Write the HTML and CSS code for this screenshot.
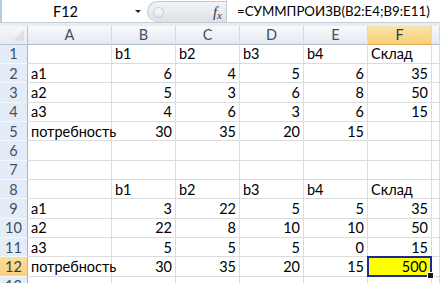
FILE: index.html
```html
<!DOCTYPE html>
<html lang="ru">

<head>
    <meta charset="UTF-8">
    <meta name="viewport" content="width=device-width, initial-scale=1.0">
    <link rel="stylesheet" href="styles.css">
    <title>СУММПРОИЗВ</title>
</head>

<body>
    <!-- Formula bar -->
    <div class="formula-bar">
        <div class="name-box">
            <span class="name-text">F12</span>
            <span class="drop-arrow"></span>
        </div>
        <div class="fx-pill">
            <span class="dot"></span>
            <span class="fx">f<sub>x</sub></span>
        </div>
        <div class="formula-input">=СУММПРОИЗВ(B2:E4;B9:E11)</div>
    </div>
    <div class="bar-gap"></div>

    <!-- Sheet -->
    <div class="sheet">
        <div class="corner"><span class="corner-tri"></span></div>
        <div class="col-head">A</div>
        <div class="col-head">B</div>
        <div class="col-head">C</div>
        <div class="col-head">D</div>
        <div class="col-head">E</div>
        <div class="col-head active">F</div>
        <div class="col-head"></div>

        <div class="row-head">1</div>
        <div class="cell"></div>
        <div class="cell">b1</div>
        <div class="cell">b2</div>
        <div class="cell">b3</div>
        <div class="cell">b4</div>
        <div class="cell">Склад</div>
        <div class="cell"></div>

        <div class="row-head">2</div>
        <div class="cell">a1</div>
        <div class="cell num">6</div>
        <div class="cell num">4</div>
        <div class="cell num">5</div>
        <div class="cell num">6</div>
        <div class="cell num">35</div>
        <div class="cell"></div>

        <div class="row-head">3</div>
        <div class="cell">a2</div>
        <div class="cell num">5</div>
        <div class="cell num">3</div>
        <div class="cell num">6</div>
        <div class="cell num">8</div>
        <div class="cell num">50</div>
        <div class="cell"></div>

        <div class="row-head">4</div>
        <div class="cell">a3</div>
        <div class="cell num">4</div>
        <div class="cell num">6</div>
        <div class="cell num">3</div>
        <div class="cell num">6</div>
        <div class="cell num">15</div>
        <div class="cell"></div>

        <div class="row-head">5</div>
        <div class="cell">потребность</div>
        <div class="cell num">30</div>
        <div class="cell num">35</div>
        <div class="cell num">20</div>
        <div class="cell num">15</div>
        <div class="cell"></div>
        <div class="cell"></div>

        <div class="row-head">6</div>
        <div class="cell"></div>
        <div class="cell"></div>
        <div class="cell"></div>
        <div class="cell"></div>
        <div class="cell"></div>
        <div class="cell"></div>
        <div class="cell"></div>

        <div class="row-head">7</div>
        <div class="cell"></div>
        <div class="cell"></div>
        <div class="cell"></div>
        <div class="cell"></div>
        <div class="cell"></div>
        <div class="cell"></div>
        <div class="cell"></div>

        <div class="row-head">8</div>
        <div class="cell"></div>
        <div class="cell">b1</div>
        <div class="cell">b2</div>
        <div class="cell">b3</div>
        <div class="cell">b4</div>
        <div class="cell">Склад</div>
        <div class="cell"></div>

        <div class="row-head">9</div>
        <div class="cell">a1</div>
        <div class="cell num">3</div>
        <div class="cell num">22</div>
        <div class="cell num">5</div>
        <div class="cell num">5</div>
        <div class="cell num">35</div>
        <div class="cell"></div>

        <div class="row-head">10</div>
        <div class="cell">a2</div>
        <div class="cell num">22</div>
        <div class="cell num">8</div>
        <div class="cell num">10</div>
        <div class="cell num">10</div>
        <div class="cell num">50</div>
        <div class="cell"></div>

        <div class="row-head">11</div>
        <div class="cell">a3</div>
        <div class="cell num">5</div>
        <div class="cell num">5</div>
        <div class="cell num">5</div>
        <div class="cell num">0</div>
        <div class="cell num">15</div>
        <div class="cell"></div>

        <div class="row-head active">12</div>
        <div class="cell">потребность</div>
        <div class="cell num">30</div>
        <div class="cell num">35</div>
        <div class="cell num">20</div>
        <div class="cell num">15</div>
        <div class="cell num selected">500<span class="handle"></span></div>
        <div class="cell"></div>

        <div class="row-head">13</div>
        <div class="cell"></div>
        <div class="cell"></div>
        <div class="cell"></div>
        <div class="cell"></div>
        <div class="cell"></div>
        <div class="cell"></div>
        <div class="cell"></div>
    </div>
</body>
</html>
```

FILE: styles.css
```css
body {
    margin: 0;
    background-color: #ffffff;
    font-family: "Lato", "Roboto", "Liberation Sans", sans-serif;
    font-size: 14.5px;
    color: #000000;
    overflow: hidden;
}

/* Formula bar */

.formula-bar {
    display: flex;
    height: 22px;
    border-bottom: 1px solid #c3cbd5;
    border-left: 2px solid #b9cbe2;
    background-color: #ffffff;
}

.name-box {
    width: 143px;
    display: flex;
    align-items: center;
    position: relative;
}

.name-text {
    flex: 1;
    text-align: center;
    padding-right: 16px;
}

.drop-arrow {
    position: absolute;
    left: 133px;
    top: 10px;
    width: 0;
    height: 0;
    border-left: 3px solid transparent;
    border-right: 3px solid transparent;
    border-top: 3px solid #222;
}

.fx-pill {
    width: 79px;
    margin-left: 2px;
    margin-top: 1px;
    display: flex;
    align-items: center;
    justify-content: space-between;
    padding: 0 4px 0 5px;
    box-sizing: border-box;
    border: 1px solid #c2c8d0;
    border-right: none;
    border-bottom: none;
    border-radius: 11px 0 0 11px;
    background: linear-gradient(#f1f3f6, #dde2e8);
}

.dot {
    width: 9px;
    height: 9px;
    border-radius: 50%;
    border: 1px solid #c6ccd4;
    background: linear-gradient(#f7f8fa, #e3e7ec);
}

.fx {
    font-family: "Liberation Serif", serif;
    font-style: italic;
    font-size: 15px;
    color: #3a3a3a;
}

.fx sub {
    font-size: 11px;
    vertical-align: -2px;
}

.formula-input {
    flex: 1;
    display: flex;
    align-items: center;
    padding-left: 10px;
    border-left: 1px solid #c3cbd5;
    font-size: 13.3px;
}

.bar-gap {
    height: 3px;
    background-color: #e8edf3;
}

/* Sheet grid */

.sheet {
    display: grid;
    grid-template-columns: 28px 84px 64px 64px 64px 64px 64px 1fr;
    grid-template-rows: 18.7px;
    grid-auto-rows: 19.33px;
}

.corner {
    background: linear-gradient(#f6f7f9, #e6eaef);
    border-right: 1px solid #b9c3cf;
    border-bottom: 1px solid #b9c3cf;
    position: relative;
}

.corner-tri {
    position: absolute;
    right: 3px;
    bottom: 3px;
    width: 0;
    height: 0;
    border-left: 11px solid transparent;
    border-bottom: 11px solid #dcdfe3;
}

.col-head {
    background: linear-gradient(#f9fafb, #e4e8ee);
    border-right: 1px solid #d5dbe2;
    border-bottom: 1px solid #aebccb;
    color: #3e4f66;
    display: flex;
    align-items: center;
    justify-content: center;
    box-sizing: border-box;
}

.col-head.active {
    background: linear-gradient(#fbe3a8, #f5cf79);
    border-bottom: 1px solid #e3a94f;
    color: #3a3a3a;
}

.row-head {
    background-color: #e4ecf7;
    border-right: 1px solid #9eb6ce;
    border-bottom: 1px solid #f4f7fb;
    color: #3e4f66;
    display: flex;
    align-items: center;
    justify-content: center;
    box-sizing: border-box;
}

.row-head.active {
    background: linear-gradient(#fbdf9c, #f6d07c);
    color: #3a3a3a;
}

.cell {
    border-right: 1px solid #dadcdd;
    border-bottom: 1px solid #dadcdd;
    box-sizing: border-box;
    display: flex;
    align-items: center;
    padding: 0 3px;
    white-space: nowrap;
    overflow: visible;
}

.num {
    justify-content: flex-end;
}

.selected {
    background-color: #ffff00;
    border: 2px solid #1b2a94;
    margin: -1px 0 0 -1px;
    position: relative;
    padding-right: 3px;
}

.handle {
    position: absolute;
    right: -4px;
    bottom: -4px;
    width: 5px;
    height: 5px;
    background-color: #1b1b1b;
    border: 1px solid #ffffff;
}
```
